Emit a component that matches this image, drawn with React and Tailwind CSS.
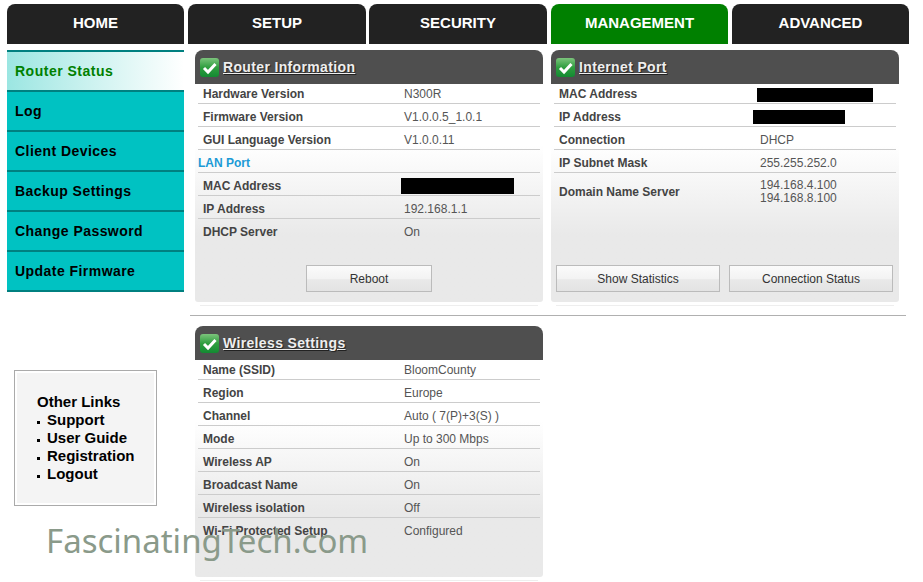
import React from "react";

const tabs = [
  { label: "HOME", width: "w-[177px]" },
  { label: "SETUP", width: "w-[178px]" },
  { label: "SECURITY", width: "w-[178px] -ml-px" },
  { label: "MANAGEMENT", width: "w-[177px]", active: true },
  { label: "ADVANCED", width: "w-[177px]" },
];

const menu = ["Log", "Client Devices", "Backup Settings", "Change Password", "Update Firmware"];
const links = ["Support", "User Guide", "Registration", "Logout"];

const CheckIcon = () => (
  <svg width="19" height="19" viewBox="0 0 19 19" className="shrink-0">
    <defs>
      <linearGradient id="okGreen" x1="0" y1="0" x2="0" y2="1">
        <stop offset="0" stopColor="#7cc47c" />
        <stop offset="0.5" stopColor="#2f9e3f" />
        <stop offset="1" stopColor="#138a32" />
      </linearGradient>
    </defs>
    <rect width="19" height="19" rx="3" fill="url(#okGreen)" />
    <path d="M4 10 L8 14 L15.5 6" fill="none" stroke="#fff" strokeWidth="3" />
  </svg>
);

const Row = ({ label, value, first, last, blackout }) => (
  <div
    className={`mx-[3px] flex pl-[5px] leading-[19px] ${first ? "h-[20px] pt-px" : "h-[23px] pt-[4px]"} ${
      last ? "" : "border-b border-[#cccccc]"
    }`}
  >
    <span className="w-[201px] shrink-0 font-bold text-[#444444]">{label}</span>
    {blackout ? blackout : <span className="text-[#555555]">{value}</span>}
  </div>
);

const Blackout = ({ className }) => <div className={`bg-black ${className}`} />;

const PanelButton = ({ label, width }) => (
  <button
    className={`${width} h-[27px] border border-[#bbbbbb] bg-[linear-gradient(#fbfbfb,#f3f3f3_50%,#e9e9e9_55%,#e3e3e3)] text-xs text-[#333333]`}
  >
    {label}
  </button>
);

const Panel = ({ title, height, children }) => (
  <div className="w-[348px]">
    <div
      className={`${height} flex flex-col rounded-b-[3px] rounded-t-lg bg-gradient-to-b from-white from-[95px] to-[#e9e9e9] to-[185px] text-xs`}
    >
      <div className="flex h-[34px] shrink-0 items-center gap-1 rounded-t-lg bg-[#4f4f4f] pl-[5px]">
        <CheckIcon />
        <span className="text-sm font-bold tracking-[0.35px] text-[#eeeeee] underline [text-shadow:1px_1px_1px_#222222]">
          {title}
        </span>
      </div>
      {children}
    </div>
    <div className="mx-[5px] mt-[3px] h-px bg-[#eeeeee]" />
  </div>
);

export default function App() {
  return (
    <div className="relative h-[582px] w-[923px] overflow-hidden bg-white font-['Liberation_Sans',Arial,sans-serif]">
      {/* top tabs */}
      <div className="flex gap-[4px] pl-[7px] pt-[4px]">
        {tabs.map((t) => (
          <div
            key={t.label}
            className={`${t.width} flex h-[40px] items-center justify-center rounded-t-lg pb-px text-[15px] font-bold text-white ${
              t.active ? "bg-[#008000]" : "bg-[#222222]"
            }`}
          >
            {t.label}
          </div>
        ))}
      </div>

      <div className="flex pl-[7px] pt-[6px]">
        {/* left column */}
        <div className="w-[177px] shrink-0">
          <div className="border-t-2 border-[#008080]">
            <div className="flex h-[40px] items-center border-b-2 border-[#008080] bg-gradient-to-r from-[#9be6e2] to-white pl-2 text-sm font-bold tracking-[0.5px] text-[#008000]">
              Router Status
            </div>
            {menu.map((m) => (
              <div
                key={m}
                className="flex h-[40px] items-center border-b-2 border-[#008080] bg-[#00c2c2] pl-2 text-sm font-bold tracking-[0.45px] text-black"
              >
                {m}
              </div>
            ))}
          </div>

          <div className="ml-[7px] mt-[78px] h-[136px] w-[143px] border border-[#aaaaaa] p-[2px]">
            <div className="h-full bg-[#f4f4f4] pl-[20px] pt-[20px] text-black">
              <div className="text-[15px]/[18px] font-bold">Other Links</div>
              {links.map((l) => (
                <div key={l} className="flex h-[18px] items-center gap-[7px] text-[15px] font-bold">
                  <span className="size-[3px] translate-y-[2px] bg-black" />
                  {l}
                </div>
              ))}
            </div>
          </div>
        </div>

        {/* right column */}
        <div className="ml-[11px]">
          <div className="flex gap-[8px]">
            <Panel title="Router Information" height="h-[252px]">
              <Row first label="Hardware Version" value="N300R" />
              <Row label="Firmware Version" value="V1.0.0.5_1.0.1" />
              <Row label="GUI Language Version" value="V1.0.0.11" />
              <div className="mx-[3px] h-[23px] border-b border-[#cccccc] pt-[4px] font-bold leading-[19px] text-[#1c9ad6]">
                LAN Port
              </div>
              <Row label="MAC Address" blackout={<Blackout className="ml-[-3px] mt-px h-[16px] w-[113px]" />} />
              <Row label="IP Address" value="192.168.1.1" />
              <Row last label="DHCP Server" value="On" />
              <div className="mb-[10px] mt-auto flex justify-center">
                <PanelButton label="Reboot" width="w-[126px]" />
              </div>
            </Panel>

            <Panel title="Internet Port" height="h-[252px]">
              <Row first label="MAC Address" blackout={<Blackout className="ml-[-3px] mt-[3px] h-[14px] w-[116px]" />} />
              <Row label="IP Address" blackout={<Blackout className="ml-[-7px] mt-[2px] h-[14px] w-[92px]" />} />
              <Row label="Connection" value="DHCP" />
              <Row label="IP Subnet Mask" value="255.255.252.0" />
              <div className="mx-[3px] flex items-center pl-[5px] pt-[6px] leading-[13px]">
                <span className="w-[201px] font-bold text-[#444444]">Domain Name Server</span>
                <span className="text-[#555555]">
                  194.168.4.100
                  <br />
                  194.168.8.100
                </span>
              </div>
              <div className="mb-[10px] mt-auto flex gap-[9px] px-[5px]">
                <PanelButton label="Show Statistics" width="w-[164px]" />
                <PanelButton label="Connection Status" width="w-[164px]" />
              </div>
            </Panel>
          </div>

          <div className="-ml-[5px] mt-[9px] h-px w-[716px] bg-[#b0b0b0]" />

          <div className="mt-[10px]">
            <Panel title="Wireless Settings" height="h-[251px]">
              <Row first label="Name (SSID)" value="BloomCounty" />
              <Row label="Region" value="Europe" />
              <Row label="Channel" value="Auto ( 7(P)+3(S) )" />
              <Row label="Mode" value="Up to 300 Mbps" />
              <Row label="Wireless AP" value="On" />
              <Row label="Broadcast Name" value="On" />
              <Row label="Wireless isolation" value="Off" />
              <Row last label="Wi-Fi Protected Setup" value="Configured" />
            </Panel>
          </div>
        </div>
      </div>

      {/* watermark over the page */}
      <div className="absolute left-[46px] top-[520px] font-['Noto_Sans',sans-serif] text-[33px]/[42px] text-[#8a9a8a]">
        FascinatingTech.com
      </div>
    </div>
  );
}
